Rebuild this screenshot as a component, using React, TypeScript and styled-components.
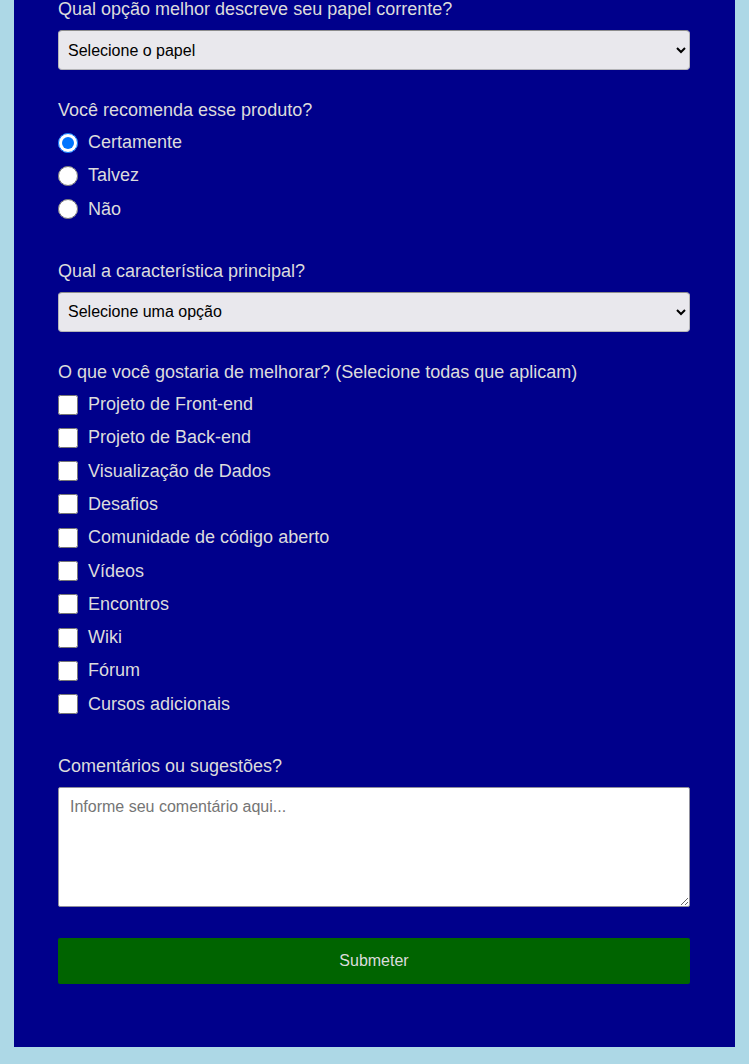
import styled, { createGlobalStyle } from "styled-components";

const GlobalStyle = createGlobalStyle`
  body {
    margin: 0;
    background-color: lightblue;
    font-family: "Liberation Sans", Arial, sans-serif;
  }
`;

const roles = ["Selecione o papel", "Estudante", "Trabalho em tempo integral", "Aprendiz", "Outro"];
const recommend = ["Certamente", "Talvez", "Não"];
const features = ["Selecione uma opção", "Desafios", "Projetos", "Comunidade", "Código aberto"];
const improvements = [
  "Projeto de Front-end",
  "Projeto de Back-end",
  "Visualização de Dados",
  "Desafios",
  "Comunidade de código aberto",
  "Vídeos",
  "Encontros",
  "Wiki",
  "Fórum",
  "Cursos adicionais",
];

const App = () => {
  return (
    <>
      <GlobalStyle />
      <Panel>
        <Form onSubmit={(e) => e.preventDefault()}>
          <Group>
            <Label htmlFor="role">Qual opção melhor descreve seu papel corrente?</Label>
            <Select id="role" defaultValue="">
              {roles.map((r, i) => (
                <option key={r} value={i === 0 ? "" : r} disabled={i === 0}>
                  {r}
                </option>
              ))}
            </Select>
          </Group>

          <Group>
            <Label as="p">Você recomenda esse produto?</Label>
            <OptionList>
              {recommend.map((r, i) => (
                <OptionRow key={r}>
                  <Radio type="radio" name="recommend" defaultChecked={i === 0} />
                  {r}
                </OptionRow>
              ))}
            </OptionList>
          </Group>

          <Group>
            <Label htmlFor="feature">Qual a característica principal?</Label>
            <Select id="feature" defaultValue="">
              {features.map((f, i) => (
                <option key={f} value={i === 0 ? "" : f} disabled={i === 0}>
                  {f}
                </option>
              ))}
            </Select>
          </Group>

          <Group>
            <Label as="p">O que você gostaria de melhorar? (Selecione todas que aplicam)</Label>
            <OptionList>
              {improvements.map((name) => (
                <OptionRow key={name}>
                  <Checkbox type="checkbox" value={name} />
                  {name}
                </OptionRow>
              ))}
            </OptionList>
          </Group>

          <Group>
            <Label htmlFor="comments">Comentários ou sugestões?</Label>
            <TextArea id="comments" placeholder="Informe seu comentário aqui..." />
          </Group>

          <SubmitButton type="submit">Submeter</SubmitButton>
        </Form>
      </Panel>
    </>
  );
};
export default App;

const Panel = styled.main`
  margin: -1px 14px 17px;
  padding: 0 45px 63px 44px;
  background-color: #00008b;
  color: #dcdcdc;
`;

const Form = styled.form`
  display: flex;
  flex-direction: column;
`;

const Group = styled.div`
  display: flex;
  flex-direction: column;
  margin-bottom: 30px;
`;

const Label = styled.label`
  display: block;
  margin: 0 0 5px;
  font-size: 18px;
  line-height: 21px;
`;

const Select = styled.select`
  margin-top: 5px;
  height: 40px;
  width: 100%;
  padding: 0 8px 0 5px;
  font-family: inherit;
  font-size: 16px;
  color: #000;
  background-color: #e9e8ed;
  border: 1px solid #b4b4b8;
  border-top-color: #8d8d8d;
  border-radius: 4px;
`;

const OptionList = styled.div`
  display: flex;
  flex-direction: column;
  padding-bottom: 5px;
`;

const OptionRow = styled.label`
  display: flex;
  align-items: center;
  height: 33.3px;
  font-size: 18px;
  cursor: pointer;
`;

const Radio = styled.input`
  width: 20px;
  height: 20px;
  margin: 0 10px 0 0;
`;

const Checkbox = styled.input`
  width: 20px;
  height: 20px;
  margin: 0 10px 0 0;
`;

const TextArea = styled.textarea`
  margin-top: 5px;
  box-sizing: border-box;
  width: 100%;
  height: 120px;
  padding: 10px 11px;
  font-family: inherit;
  font-size: 16px;
  background-color: #fff;
  border: 1px solid #8f8f9d;
  border-radius: 2px;
  resize: vertical;

  &::placeholder {
    color: #757575;
  }
`;

const SubmitButton = styled.button`
  margin-top: 1px;
  height: 46px;
  width: 100%;
  font-family: inherit;
  font-size: 16px;
  color: #dcdcdc;
  background-color: #006400;
  border: none;
  border-radius: 2px;
  cursor: pointer;
`;
